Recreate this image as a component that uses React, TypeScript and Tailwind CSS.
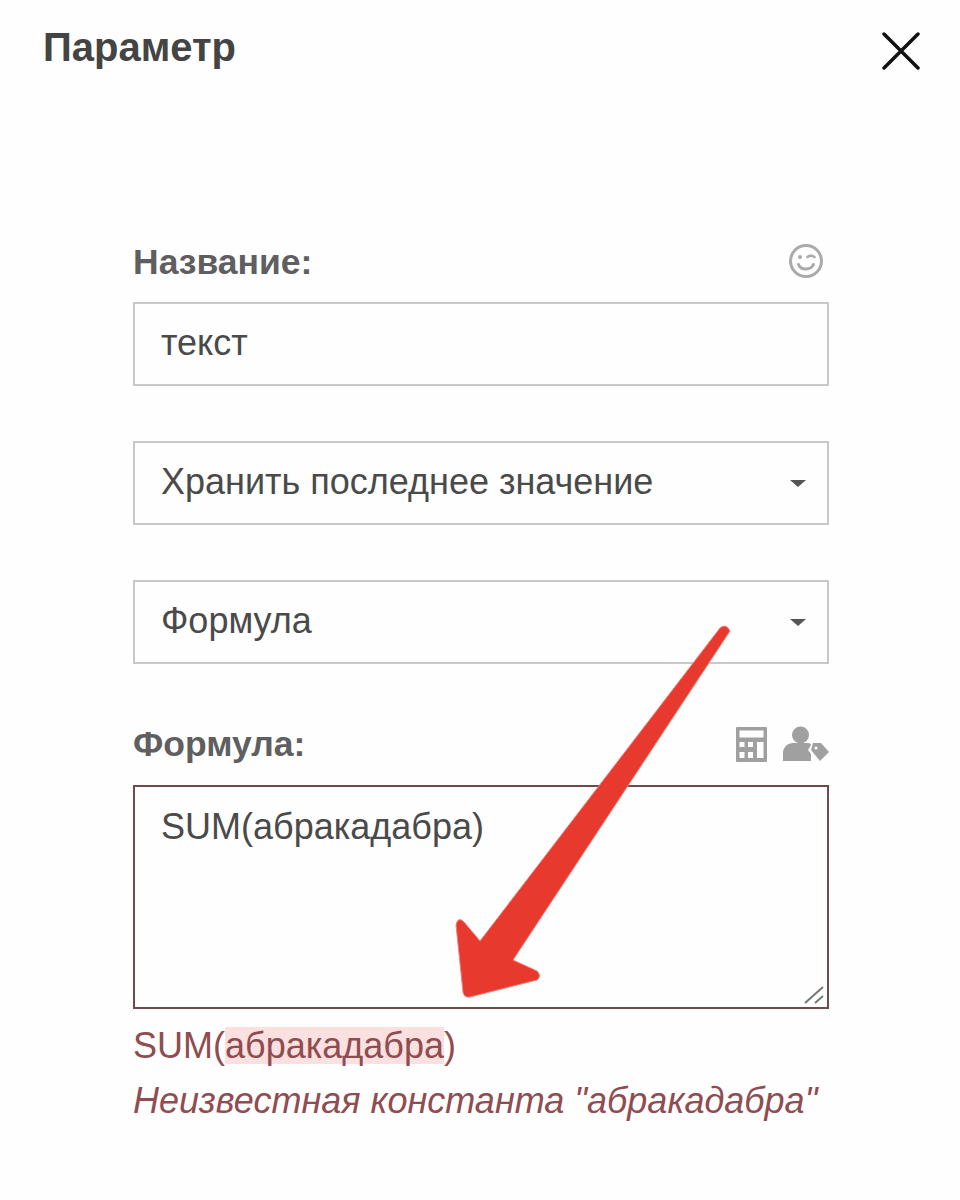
const font = "font-['Liberation_Sans',Arial,sans-serif]";

function CaretDown() {
	return (
		<svg width="16" height="7" viewBox="0 0 16 7" className="shrink-0">
			<path d="M0 0h16L8 7z" fill="#555" />
		</svg>
	);
}

function SelectBox({ value }: { value: string }) {
	return (
		<div className="h-[84px] border-2 border-[#c8c8ca] flex items-center justify-between pl-[26px] pr-[21px] pb-[2px] text-[#4a4a4a]">
			<span>{value}</span>
			<span className="pt-[2px] flex">
				<CaretDown />
			</span>
		</div>
	);
}

function WinkIcon() {
	return (
		<svg width="34" height="34" viewBox="0 0 34 34" fill="none" stroke="#aaaaaa" strokeWidth="3" className="block">
			<circle cx="17" cy="17" r="15.500" />
			<circle cx="11" cy="13" r="2" fill="#aaaaaa" stroke="none" />
			<path d="M18.500 13c2-1.500 4.500-1.500 7 0" strokeWidth="2.500" strokeLinecap="round" />
			<path d="M9.500 20.500c2 6 12.500 6 15 0" strokeLinecap="round" />
		</svg>
	);
}

function CalculatorIcon() {
	return (
		<svg width="31" height="35" viewBox="0 0 31 35" className="block">
			<rect width="31" height="35" rx="1" fill="#a0a0a0" />
			<rect x="3.500" y="3.500" width="24" height="7" fill="#fff" />
			<path d="M3.500 15h5v5h-5zM12 15h5v5h-5zM3.500 25h5v6h-5zM12 25h5v6h-5zM21 15h6.500v16H21z" fill="#fff" />
		</svg>
	);
}

function PersonTagIcon() {
	return (
		<svg width="46" height="38" viewBox="0 0 46 38" fill="#a0a0a0" className="block">
			<circle cx="17.500" cy="10" r="8.500" />
			<path d="M0 36v-8c0-6 5-10 10-10h15c2 0 3 1 3 2l-3 5 3 4v7z" />
			<path d="M30 18h8l8 9-9 9-9-11z" />
			<circle cx="33" cy="23" r="1.500" fill="#fff" />
		</svg>
	);
}

export default function App() {
	return (
		<div className={`${font} relative w-[960px] h-[1200px] bg-[#fefefe] overflow-hidden`}>
			{/* Header */}
			<div className="flex items-start justify-between pl-[43px] pr-[40px] pt-[26px]">
				<h1 className="text-[40px] leading-[42px] font-bold text-[#444]">Параметр</h1>
				<button type="button" className="mt-[6px]">
					<svg width="38" height="38" viewBox="0 0 38 38" fill="none" stroke="#111" strokeWidth="3.500" strokeLinecap="round" className="block">
						<path d="M2 2l34 34M36 2L2 36" />
					</svg>
				</button>
			</div>

			{/* Form */}
			<div className="w-[696px] ml-[133px] mt-[172px] text-[36px] leading-[40px]">
				<div className="flex items-center justify-between h-[40px]">
					<label className="font-bold text-[35.500px] text-[#5f5f61]">Название:</label>
					<span className="mr-[6px] mb-[2px]">
						<WinkIcon />
					</span>
				</div>
				<div className="mt-[20px] h-[84px] border-2 border-[#c8c8ca] flex items-center pl-[26px] pb-[2px] text-[#4a4a4a]">текст</div>

				<div className="mt-[55px] flex flex-col gap-[55px]">
					<SelectBox value="Хранить последнее значение" />
					<SelectBox value="Формула" />
				</div>

				<div className="mt-[60px] flex items-center justify-between h-[40px]">
					<label className="font-bold text-[35.500px] text-[#5f5f61]">Формула:</label>
					<div className="flex items-center gap-[16px]">
						<CalculatorIcon />
						<PersonTagIcon />
					</div>
				</div>

				<div className="relative mt-[21px] h-[224px] border-2 border-[#6e4a4e] pl-[26px] pt-[20px] text-[#4a4a4a]">
					SUM(абракадабра)
					<svg width="24" height="20" viewBox="0 0 24 20" fill="none" stroke="#777" strokeWidth="2" className="absolute right-[0px] bottom-[2px]">
						<path d="M2 18L20 2M12 18l8-7" />
					</svg>
				</div>

				<div className="mt-[17px] text-[#8f4d52]">
					SUM(<span className="inline-block leading-[37px] bg-[#fbe0e0]">абракадабра</span>)
				</div>
				<div className="mt-[15px] italic text-[#8f4d52] whitespace-nowrap">Неизвестная константа "абракадабра"</div>
			</div>

			{/* Annotation arrow */}
			<svg width="960" height="1200" viewBox="0 0 960 1200" className="absolute inset-0 pointer-events-none">
				<path
					d="M720 628Q726 623 730 631L513 960L537 971Q542 976 537 980L470 997Q464 998 463 992L456 925Q458 916 464 922L480 941z"
					fill="#e8392f"
					stroke="#f08078"
					strokeWidth="1"
				/>
			</svg>
		</div>
	);
}
